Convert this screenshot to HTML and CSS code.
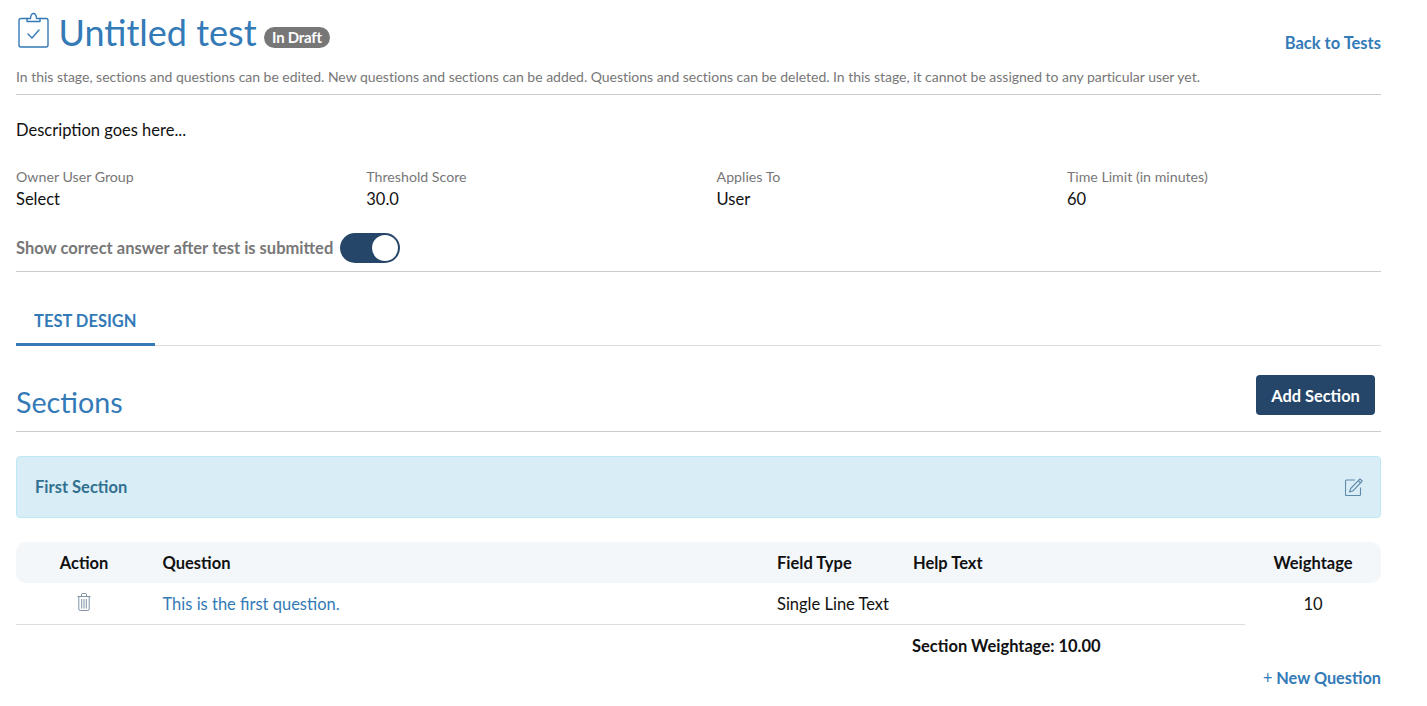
FILE: index.html

```html
<!DOCTYPE html>
<html lang="en">
<head>
    <meta charset="UTF-8">
    <title>Untitled test</title>
    <link rel="stylesheet" href="styles.css">
</head>
<body>

<div class="page">
    <header class="test-header">
        <div class="title-row">
            <div class="title-left">
                <svg class="clip-icon" width="31" height="36" viewBox="0 0 31 36" fill="none" stroke="#337ab7" stroke-width="1.4" stroke-linecap="round" stroke-linejoin="round">
                    <path d="M9 6.500H3A2 2 0 0 0 1 8.500V33A2 2 0 0 0 3 35H28A2 2 0 0 0 30 33V8.500A2 2 0 0 0 28 6.500H22"/>
                    <path d="M9 9.500V6.500H12.500C12.700 3.500 13.800 1.500 15.500 1.500C17.200 1.500 18.300 3.500 18.500 6.500H22V9.500Z"/>
                    <path d="M10 22L14 26L21 18"/>
                </svg>
                <h1 class="title">Untitled test</h1>
                <span class="badge">In Draft</span>
            </div>
            <a class="back-link" href="#">Back to Tests</a>
        </div>
        <p class="stage-note">In this stage, sections and questions can be edited. New questions and sections can be added. Questions and sections can be deleted. In this stage, it cannot be assigned to any particular user yet.</p>
    </header>

    <p class="description">Description goes here...</p>

    <div class="meta-grid">
        <div class="meta-item">
            <div class="meta-label">Owner User Group</div>
            <div class="meta-value">Select</div>
        </div>
        <div class="meta-item">
            <div class="meta-label">Threshold Score</div>
            <div class="meta-value">30.0</div>
        </div>
        <div class="meta-item">
            <div class="meta-label">Applies To</div>
            <div class="meta-value">User</div>
        </div>
        <div class="meta-item">
            <div class="meta-label">Time Limit (in minutes)</div>
            <div class="meta-value">60</div>
        </div>
    </div>

    <div class="toggle-row">
        <span class="toggle-label">Show correct answer after test is submitted</span>
        <span class="toggle"><span class="toggle-knob"></span></span>
    </div>

    <nav class="tabs">
        <a class="tab active" href="#">TEST DESIGN</a>
    </nav>

    <div class="sections-head">
        <h2 class="sections-title">Sections</h2>
        <button class="btn-add" type="button">Add Section</button>
    </div>

    <div class="section-panel">
        <span class="section-name">First Section</span>
        <svg class="edit-icon" width="18" height="18" viewBox="0 0 18 18" fill="none" stroke="#5f89a8" stroke-width="1.100" stroke-linejoin="round">
            <path d="M15.500 9.500V16.500A1 1 0 0 1 14.500 17.500H1.500A1 1 0 0 1 .5 16.500V3A1 1 0 0 1 1.500 2H10"/>
            <path d="M15 .8L17.200 3L8 12.800L4.500 14L5.700 10.500Z"/>
            <path d="M13.300 2.500L15.500 4.800"/>
        </svg>
    </div>

    <table class="questions">
        <colgroup>
            <col class="col-action">
            <col class="col-question">
            <col class="col-type">
            <col class="col-help">
            <col class="col-weight">
        </colgroup>
        <thead>
            <tr>
                <th class="center">Action</th>
                <th>Question</th>
                <th>Field Type</th>
                <th>Help Text</th>
                <th class="center">Weightage</th>
            </tr>
        </thead>
        <tbody>
            <tr>
                <td class="center">
                    <svg class="trash-icon" width="14" height="18" viewBox="0 0 14 18" fill="none" stroke="#7f93a5" stroke-width="1">
                        <path d="M.5 3.500H13.500"/>
                        <path d="M4.500 3.500V1.500A1 1 0 0 1 5.500 .5H8.500A1 1 0 0 1 9.500 1.500V3.500"/>
                        <path d="M1.800 3.500V16A1.500 1.500 0 0 0 3.300 17.500H10.700A1.500 1.500 0 0 0 12.200 16V3.500"/>
                        <path d="M4.700 6V15.500M7 6V15.500M9.300 6V15.500"/>
                    </svg>
                </td>
                <td><a class="question-link" href="#">This is the first question.</a></td>
                <td>Single Line Text</td>
                <td></td>
                <td class="center no-line">10</td>
            </tr>
        </tbody>
    </table>

    <div class="section-weight">Section Weightage: 10.00</div>
    <div class="new-question"><a href="#"><span class="plus">+</span> New Question</a></div>
</div>

</body>
</html>
```

FILE: styles.css

```css
body {
    font-family: Lato, "Open Sans", sans-serif;
    margin: 0;
    padding: 0;
    background-color: #fff;
    color: #111;
    font-size: 16.500px;
}

a {
    color: #337ab7;
    text-decoration: none;
}

.page {
    padding: 0 46px 0 16px;
}

.test-header {
    border-bottom: 1px solid #ccc;
    height: 94px;
}

.title-row {
    display: flex;
    justify-content: space-between;
    align-items: flex-start;
}

.title-left {
    display: flex;
    align-items: flex-start;
}

.clip-icon {
    margin: 12px 0 0 2px;
}

.title {
    margin: 10px 0 0 9.500px;
    font-size: 36px;
    line-height: 44px;
    font-weight: 400;
    color: #337ab7;
}

.badge {
    margin: 27px 0 0 7.500px;
    height: 21px;
    line-height: 20px;
    padding: 0 8px;
    border-radius: 11px;
    background: #777;
    color: #fff;
    font-size: 15px;
    letter-spacing: -.25px;
    font-weight: 700;
}

.back-link {
    margin-top: 33px;
    line-height: 20px;
    font-weight: 700;
}

.stage-note {
    margin: 14px 0 0;
    font-size: 14px;
    letter-spacing: -.02px;
    line-height: 18px;
    color: #777;
}

.description {
    margin: 0;
    padding-top: 25px;
    line-height: 20px;
}

.meta-grid {
    display: grid;
    grid-template-columns: repeat(4, 350.300px);
    margin-top: 28px;
}

.meta-label {
    font-size: 14.200px;
    line-height: 18px;
    color: #777;
}

.meta-value {
    margin-top: 1px;
    line-height: 24px;
}

.toggle-row {
    display: flex;
    align-items: flex-start;
    height: 37px;
    margin-top: 22px;
    padding-bottom: 1px;
    border-bottom: 1px solid #ccc;
}

.toggle-label {
    margin-top: 5px;
    line-height: 20px;
    font-weight: 700;
    color: #777;
}

.toggle {
    display: flex;
    justify-content: flex-end;
    align-items: center;
    box-sizing: border-box;
    width: 60px;
    height: 30px;
    margin-left: 7px;
    padding-right: 2px;
    border-radius: 15px;
    background: #254669;
}

.toggle-knob {
    width: 26px;
    height: 26px;
    border-radius: 50%;
    background: #fff;
}

.tabs {
    display: flex;
    margin-top: 27px;
    height: 46px;
    border-bottom: 1px solid #ddd;
}

.tab {
    box-sizing: border-box;
    width: 139px;
    height: 47px;
    padding: 12px 18px 0;
    line-height: 20px;
    font-weight: 700;
    border-bottom: 3px solid #337ab7;
}

.sections-head {
    display: flex;
    justify-content: space-between;
    align-items: flex-start;
    height: 85px;
    border-bottom: 1px solid #ccc;
}

.sections-title {
    margin: 38px 0 0;
    font-size: 28.700px;
    line-height: 36px;
    font-weight: 400;
    color: #337ab7;
}

.btn-add {
    margin: 29px 6px 0 0;
    width: 119px;
    height: 40px;
    padding: 0;
    border: 0;
    border-radius: 4px;
    background: #254669;
    color: #fff;
    font-family: inherit;
    font-size: 16.400px;
    font-weight: 700;
}

.section-panel {
    display: flex;
    justify-content: space-between;
    align-items: center;
    box-sizing: border-box;
    height: 62px;
    margin-top: 24px;
    padding: 0 17px 0 18px;
    background: #d9edf7;
    border: 1px solid #bce8f1;
    border-radius: 4px;
}

.section-name {
    font-weight: 700;
    color: #31708f;
}

.questions {
    width: 100%;
    margin-top: 24px;
    border-collapse: separate;
    border-spacing: 0;
    table-layout: fixed;
}

.col-action { width: 136px; }
.col-question { width: 614.500px; }
.col-type { width: 136px; }
.col-help { width: 342.500px; }
.col-weight { width: 136px; }

.questions th {
    height: 41px;
    padding: 0 0 0 10.500px;
    box-sizing: border-box;
    background: #f3f7fa;
    font-weight: 700;
    text-align: left;
}

.questions th:first-child {
    border-radius: 10px 0 0 10px;
}

.questions th:last-child {
    border-radius: 0 10px 10px 0;
}

.questions td {
    height: 41px;
    padding: 0 0 0 10.500px;
    border-bottom: 1px solid #ddd;
}

.questions .center {
    padding-left: 0;
    text-align: center;
}

.questions td.no-line {
    border-bottom-color: transparent;
}

.trash-icon {
    display: inline-block;
    vertical-align: middle;
    margin-top: -6px;
}

.section-weight {
    margin: 11px 0 0 896px;
    line-height: 20px;
    font-weight: 700;
}

.new-question {
    margin-top: 12px;
    font-size: 16.300px;
    text-align: right;
    line-height: 20px;
    font-weight: 700;
}

.plus {
    font-weight: 400;
}
```
